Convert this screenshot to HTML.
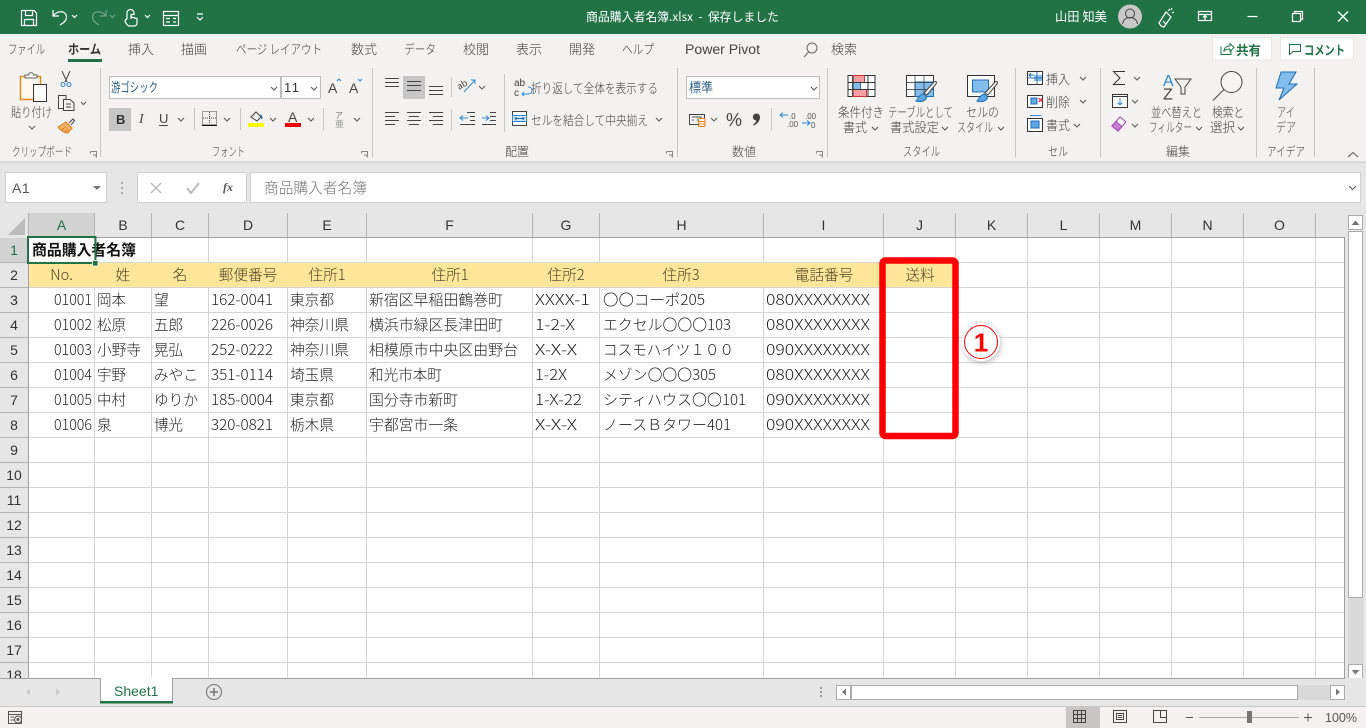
<!DOCTYPE html>
<html lang="ja"><head><meta charset="utf-8"><title>商品購入者名簿.xlsx</title>
<style>
html,body{margin:0;padding:0;width:1366px;height:728px;overflow:hidden;background:#e6e6e6}
svg{display:block;position:absolute;left:0;top:0}
text{font-family:"Liberation Sans","Noto Sans CJK JP",sans-serif}
.j{font-family:"Noto Sans CJK JP","Liberation Sans",sans-serif}
.r{font-size:13px;fill:#444;font-family:"Noto Sans CJK JP","Liberation Sans",sans-serif;font-weight:300}
.t{font-size:13px;fill:#444;font-family:"Noto Sans CJK JP","Liberation Sans",sans-serif;font-weight:300}
.c{font-size:14.67px;fill:#222;font-family:"Noto Sans CJK JP","Liberation Sans",sans-serif;font-weight:300}
.h{font-size:14.67px;fill:#4a4028;text-anchor:middle;font-family:"Noto Sans CJK JP","Liberation Sans",sans-serif;font-weight:300}
.ch{font-size:14px;fill:#333;text-anchor:middle}
.rh{font-size:14px;fill:#333;text-anchor:middle}
.ln{stroke:#444;fill:none;stroke-width:1}
.chev{stroke:#555;fill:none;stroke-width:1}
</style></head><body>
<svg width="1366" height="728" viewBox="0 0 1366 728" xmlns="http://www.w3.org/2000/svg">
<!-- backgrounds -->
<rect width="1366" height="728" fill="#e6e6e6"/>
<rect width="1366" height="34" fill="#217346"/>
<rect y="34" width="1366" height="127" fill="#f3f2f1"/>
<rect y="161" width="1366" height="2" fill="#d8d8d8"/>

<!-- title bar icons -->
<g stroke="#fff" fill="none" stroke-width="1.2">
<path d="M21.5 10.5H34L36.5 13V25.5H21.5Z"/><path d="M25.5 10.5V15.5H32.5V10.5"/><path d="M24.5 25.5V19.5H33.5V25.5"/>
<path d="M53 10V16H59"/><path d="M53.5 15.5C57 10.5 66 10 66.5 17C66.8 20 63.5 23 60 25"/>
<path d="M72 15l2.500 2.500 2.500-2.500"/>
<g opacity=".35"><path d="M106 10V16H100"/><path d="M105.500 15.500C102 10.500 93 10 92.500 17C92.200 20 95.500 23 99 25"/><path d="M110 15l2.500 2.500 2.500-2.500"/></g>
<path d="M127 19V13a3.500 3.500 0 0 1 7 0V14.500h-3V19M127 19a3 3 0 0 0-2 2.500c1 2 2 4 4 4.500h5c2 0 3-1.500 3-3v-4.500l-6-1.500"/>
<path d="M145 15l2.500 2.500 2.500-2.500"/>
<rect x="163.500" y="11.500" width="15" height="14"/><path d="M164 15.500H178M166 18.500H170M173 18.500H176M166 22H170M173 22H176"/>
<path d="M197 14H203M197 17l3 3 3-3"/>
<rect x="1198.500" y="11.500" width="13" height="9"/><path d="M1198.500 14.500h13M1205 20v-4M1203 17.500l2-2 2 2"/>
<path d="M1247.500 16.500H1257.500"/>
<rect x="1292.500" y="13.500" width="8" height="8"/><path d="M1294.500 13V11.500H1302.500V19.500H1301"/>
<path d="M1338 11.500L1348 21.500M1348 11.500L1338 21.500" stroke-width="1.300"/>
<path d="M1161 26l-2-3 7-11 5 5-7 10zM1168 11l2-2M1172 13l2-1M1171 10l1-2M1163 21l3 3"/>
</g>
<text x="586" y="21" class="j" style="font-size:12px;fill:#fff" textLength="193" lengthAdjust="spacingAndGlyphs">商品購入者名簿.xlsx&#160;&#160;-&#160;&#160;保存しました</text>
<text x="1055" y="21" class="j" style="font-size:12.500px;fill:#fff" textLength="52" lengthAdjust="spacingAndGlyphs">山田&#160;知美</text>
<circle cx="1130" cy="16.500" r="12" fill="#c8c8c8"/>
<circle cx="1130" cy="13.500" r="4.500" fill="none" stroke="#444"/><path d="M1122.500 24c1-5 4-6.500 7.500-6.500s6.500 1.500 7.500 6.500" fill="none" stroke="#444"/>

<!-- tabs -->
<text x="8" y="54" class="t" textLength="37" lengthAdjust="spacingAndGlyphs">ファイル</text>
<text x="68" y="54" class="t" textLength="33" lengthAdjust="spacingAndGlyphs" style="font-weight:700;fill:#333">ホーム</text>
<rect x="68" y="59" width="34" height="3" fill="#217346"/>
<text x="128" y="54" class="t" textLength="26" lengthAdjust="spacingAndGlyphs">挿入</text>
<text x="181" y="54" class="t" textLength="26" lengthAdjust="spacingAndGlyphs">描画</text>
<text x="236" y="54" class="t" textLength="86" lengthAdjust="spacingAndGlyphs">ページ&#160;レイアウト</text>
<text x="351" y="54" class="t" textLength="26" lengthAdjust="spacingAndGlyphs">数式</text>
<text x="404" y="54" class="t" textLength="32" lengthAdjust="spacingAndGlyphs">データ</text>
<text x="463" y="54" class="t" textLength="26" lengthAdjust="spacingAndGlyphs">校閲</text>
<text x="516" y="54" class="t" textLength="26" lengthAdjust="spacingAndGlyphs">表示</text>
<text x="569" y="54" class="t" textLength="26" lengthAdjust="spacingAndGlyphs">開発</text>
<text x="622" y="54" class="t" textLength="32" lengthAdjust="spacingAndGlyphs">ヘルプ</text>
<text x="685" y="54" textLength="75" lengthAdjust="spacingAndGlyphs" style="font-family:'Liberation Sans';font-size:13.500px;fill:#444">Power Pivot</text>
<g fill="none" stroke="#666"><circle cx="812" cy="48" r="5"/><path d="M808.500 52L804 57"/></g>
<text x="831" y="54" class="t" textLength="26" lengthAdjust="spacingAndGlyphs">検索</text>

<rect x="1212.500" y="38" width="59" height="22" fill="#fff" stroke="#e6e6e6"/>
<rect x="1280.500" y="38" width="73" height="22" fill="#fff" stroke="#e6e6e6"/>
<g fill="none" stroke="#217346"><path d="M1221 46.500V54.500H1231V50M1224 50c1-3 3-4 6-4V43.500l4 4-4 4V49c-2 0-4 0-6 2z"/><path d="M1289.500 44.500H1300.500V51.500H1293L1289.500 54.500Z"/></g>
<text x="1236" y="55" class="j" style="font-size:13px;font-weight:700;fill:#217346" textLength="25" lengthAdjust="spacingAndGlyphs">共有</text>
<text x="1304" y="55" class="j" style="font-size:13px;font-weight:700;fill:#217346" textLength="41" lengthAdjust="spacingAndGlyphs">コメント</text>

<!-- group separators -->
<g stroke="#c8c6c4"><path d="M100.500 68V157M372.500 68V157M677.500 68V157M827.500 68V157M1015.500 68V157M1100.500 68V157M1256.500 68V157M1314.500 68V157"/>
<path d="M451.500 77V97M451.500 109V130M504.500 74V132M194.500 108V130M240.500 108V130M323.500 108V130M771.500 108V130"/></g>

<!-- clipboard -->
<rect x="20.500" y="76.500" width="20" height="23" fill="#fff8ee" stroke="#e38a1c" stroke-width="1.500"/>
<path d="M25 78V75h3.500c0-3 5-3 5 0H37V78Z" fill="#f3f2f1" stroke="#666"/>
<rect x="33.500" y="84.500" width="13" height="17" fill="#fff" stroke="#333"/>
<text x="11" y="117" class="r" textLength="41" lengthAdjust="spacingAndGlyphs">貼り付け</text>
<path d="M29 126l3 3 3-3" class="chev"/>
<g fill="none" stroke="#444"><path d="M62 71l5 11M70 71l-5 11"/><g stroke="#2b88d8"><circle cx="63" cy="84.500" r="2"/><circle cx="69" cy="84.500" r="2"/></g>
<path d="M63 108.500H58.500V95.500H66V99M63.500 99.500H70L74 103V110.500H63.500ZM66 104H71M66 107H71"/></g>
<path d="M81 102l2.500 2.500 2.500-2.500" class="chev"/>
<path d="M58 127l8-5 6 6-4 5c-4 0-8-3-10-6z" fill="#f6b26b" stroke="#d97a0e"/><path d="M62 130l3-3M65 132l3-3" stroke="#d97a0e" fill="none"/><path d="M69 123l4-4 1.500 1.500-3.500 4.500" fill="#f3f2f1" stroke="#444"/>
<text x="12" y="156" class="r" style="font-size:12.500px" textLength="60" lengthAdjust="spacingAndGlyphs">クリップボード</text>
<path d="M90.500 151.500h6v6M90.500 151.500v2M93 155h3v2" stroke="#888" fill="none"/>

<!-- font -->
<rect x="109.500" y="76.500" width="171" height="22" fill="#fff" stroke="#bdbdbd"/>
<rect x="281.500" y="76.500" width="39" height="22" fill="#fff" stroke="#bdbdbd"/>
<text x="111" y="92" class="r" textLength="47" lengthAdjust="spacingAndGlyphs" style="fill:#2d5f8a;font-weight:400">游ゴシック</text>
<text x="284" y="92" style="font-size:13px;fill:#333" textLength="15">11</text>
<path d="M271 87l3 3 3-3M311 87l3 3 3-3" class="chev"/>
<text x="328" y="93" style="font-size:14px;fill:#444">A</text><path d="M337 81l2-2 2 2" stroke="#2b88d8" fill="none"/>
<text x="349" y="93" style="font-size:14px;fill:#444">A</text><path d="M358 79l2 2 2-2" stroke="#2b88d8" fill="none"/>
<rect x="109" y="108" width="22" height="23" fill="#c6c6c6"/>
<text x="116" y="124" style="font-size:13px;font-weight:700;fill:#333">B</text>
<text x="139" y="123" style="font-size:14px;font-style:italic;font-family:'Liberation Serif';fill:#444">I</text>
<text x="159" y="123" style="font-size:13px;fill:#444">U</text><path d="M159 125.500H168" stroke="#444"/>
<path d="M178 118l3 3 3-3M224 118l3 3 3-3M270 118l3 3 3-3M308 118l3 3 3-3M354 118l3 3 3-3" class="chev"/>
<rect x="202.500" y="111.500" width="14" height="13" fill="none" stroke="#444" stroke-dasharray="1 1"/><path d="M209.500 112V124M203 118H216" stroke="#444" stroke-dasharray="1 1"/><path d="M202 125.500H217" stroke="#111"/>
<path d="M251 117l5-5 5 5-4 4z" fill="none" stroke="#444"/><path d="M260 115c2 1 2 3 1.500 4" stroke="#2b6fb3" fill="none" stroke-width="1.500"/>
<rect x="248" y="123" width="16" height="4" fill="#ff0"/>
<text x="288" y="122" style="font-size:14px;fill:#444">A</text><rect x="285" y="123" width="16" height="4" fill="#e00"/>
<text x="335" y="118" class="j" style="font-size:8px;fill:#777">ア</text><text x="335" y="127" class="j" style="font-size:9px;fill:#999">亜</text>
<text x="212" y="156" class="r" style="font-size:12.500px" textLength="33" lengthAdjust="spacingAndGlyphs">フォント</text>
<path d="M361.500 151.500h6v6M361.500 151.500v2M364 155h3v2" stroke="#888" fill="none"/>

<!-- alignment -->
<rect x="403" y="76" width="22" height="23" fill="#c6c6c6"/>
<g stroke="#444"><path d="M385 78.500H399M385 82.500H399M385 86.500H399M407 81.500H421M407 85.500H421M407 90.500H421M429 86.500H443M429 90.500H443M429 94.500H443"/>
<path d="M385 112.500H399M385 116.500H395M385 120.500H399M385 124.500H395M407 112.500H421M409 116.500H419M407 120.500H421M409 124.500H419M429 112.500H443M433 116.500H443M429 120.500H443M433 124.500H443"/>
<path d="M467 112.500H475M470 116.500H475M470 120.500H475M460 124.500H475M490 112.500H496M490 116.500H496M490 120.500H496M482 124.500H496"/></g>
<path d="M468 118H460M463 115.500L460 118L463 120.500M482 118H489M486 115.500L489 118L486 120.500" stroke="#2b88d8" fill="none"/>
<text x="459" y="90" class="j" style="font-size:9px;fill:#444" transform="rotate(-30 459 90)">ab</text><path d="M464 92L475 80M471 80h4v4" stroke="#2b88d8" fill="none"/>
<path d="M479 86l3 3 3-3M656 118l3 3 3-3" class="chev"/>
<text x="514" y="86" style="font-size:10px;fill:#444">ab</text><text x="514" y="96" style="font-size:10px;fill:#444">c</text><path d="M528 87c3 0 4 1 4 3.500s-2 3.500-4 3.500h-6M524 92l-2 2 2 2" stroke="#2b88d8" fill="none"/>
<text x="531" y="93" class="r" textLength="127" lengthAdjust="spacingAndGlyphs">折り返して全体を表示する</text>
<rect x="512.500" y="111.500" width="14" height="14" fill="#fff" stroke="#444"/><rect x="512.500" y="115.500" width="14" height="6" fill="#cfe6f8" stroke="#2b88d8"/><path d="M515 118.500H524M516.500 117l-1.500 1.500 1.500 1.500M522.500 117l1.500 1.500-1.500 1.500" stroke="#2b6fb3" fill="none"/>
<text x="531" y="125" class="r" textLength="117" lengthAdjust="spacingAndGlyphs">セルを結合して中央揃え</text>
<text x="505" y="156" class="r" style="font-size:12.500px" textLength="24" lengthAdjust="spacingAndGlyphs">配置</text>
<path d="M666.500 151.500h6v6M666.500 151.500v2M669 155h3v2" stroke="#888" fill="none"/>

<!-- number -->
<rect x="686.500" y="76.500" width="133" height="22" fill="#fff" stroke="#bdbdbd"/>
<text x="689" y="92" class="r" textLength="24" lengthAdjust="spacingAndGlyphs" style="fill:#2d5f8a;font-weight:400">標準</text>
<path d="M811 87l3 3 3-3M711 118l3 3 3-3" class="chev"/>
<rect x="689.500" y="114.500" width="15" height="10" fill="none" stroke="#444"/><path d="M692 117h10M692 120h2M697 120h5" stroke="#555"/>
<rect x="698.500" y="118.500" width="6.500" height="8" rx="1" fill="#fff" stroke="#e07a10"/><path d="M699 121.500h6M699 124h6" stroke="#e07a10"/>
<text x="726" y="126" style="font-size:18px;fill:#444">%</text>
<path d="M756.500 113.500a3.500 3.500 0 0 1 3.500 3.500c0 4-2.500 7-6.500 8.500l-.5-1c2-1 3-2.500 3.200-4a3.500 3.500 0 0 1 .3-7z" fill="#444"/>
<text x="789" y="119" style="font-size:8px;fill:#555">.0</text><text x="787" y="127" style="font-size:8px;fill:#555">.00</text>
<path d="M780 115H788M783 112.500L780 115L783 117.500" stroke="#2b88d8" fill="none"/>
<text x="805" y="119" style="font-size:8px;fill:#555">.00</text><text x="811" y="128" style="font-size:8px;fill:#555">0</text>
<path d="M802 123H810M807 120.500L810 123L807 125.500" stroke="#2b88d8" fill="none"/>
<text x="732" y="156" class="r" style="font-size:12.500px" textLength="24" lengthAdjust="spacingAndGlyphs">数値</text>
<path d="M816.500 151.500h6v6M816.500 151.500v2M819 155h3v2" stroke="#888" fill="none"/>

<!-- styles -->
<g>
<rect x="848" y="75.500" width="27" height="21" fill="#fff" stroke="#333"/>
<rect x="852.500" y="75.500" width="12" height="7" fill="#fa9ea4" stroke="#d13438"/>
<rect x="852.500" y="89.500" width="14" height="7" fill="#fa9ea4" stroke="#d13438"/>
<rect x="852.500" y="82.500" width="8" height="7" fill="#83bdec" stroke="#2b6fb3"/>
<path d="M868 76V96M848 82.500H875M848 89.500H875M853 76V96" stroke="#333" fill="none"/>

<rect x="906.500" y="75.500" width="27" height="21" fill="#fff" stroke="#333"/>
<rect x="915" y="82" width="18.500" height="14.500" fill="#83bdec" stroke="#1f6fb5"/>
<path d="M906 82.500H934M906 89.500H934M915 76V96M924 76V96" stroke="#333" fill="none" stroke-width=".7"/>
<path d="M924 93l10-11c2-1.500 3 0 2 2l-9 11z" fill="#f3f2f1" stroke="#444"/><path d="M916 101c2-1 2-6 7-7 3 1 4 3 3 5-3 3-7 3-10 2z" fill="#5ea7e5" stroke="#1f6fb5"/>

<rect x="967.500" y="75.500" width="27" height="21" fill="#fff" stroke="#333"/>
<rect x="972.500" y="80" width="16" height="12" fill="#83bdec" stroke="#1f6fb5"/>
<path d="M985 93l10-11c2-1.500 3 0 2 2l-9 11z" fill="#f3f2f1" stroke="#444"/><path d="M977 101c2-1 2-6 7-7 3 1 4 3 3 5-3 3-7 3-10 2z" fill="#5ea7e5" stroke="#1f6fb5"/>
</g>
<text x="838" y="117" class="r" textLength="46" lengthAdjust="spacingAndGlyphs">条件付き</text>
<text x="843" y="132" class="r" textLength="24" lengthAdjust="spacingAndGlyphs">書式</text><path d="M872 127l3 3 3-3" class="chev"/>
<text x="888" y="117" class="r" textLength="65" lengthAdjust="spacingAndGlyphs">テーブルとして</text>
<text x="890" y="132" class="r" textLength="49" lengthAdjust="spacingAndGlyphs">書式設定</text><path d="M942 127l3 3 3-3" class="chev"/>
<text x="966" y="117" class="r" textLength="33" lengthAdjust="spacingAndGlyphs">セルの</text>
<text x="957" y="132" class="r" textLength="36" lengthAdjust="spacingAndGlyphs">スタイル</text><path d="M998 127l3 3 3-3" class="chev"/>
<text x="903" y="156" class="r" style="font-size:12.500px" textLength="37" lengthAdjust="spacingAndGlyphs">スタイル</text>

<!-- cells -->
<g>
<rect x="1027.500" y="71.500" width="15" height="13" fill="#fff" stroke="#333"/><rect x="1034" y="75" width="8" height="6" fill="#83bdec"/><path d="M1037 72V84M1028 78H1042M1034 75H1029M1031 73l-2 2 2 2" stroke="#2b6fb3" fill="none"/>
<rect x="1027.500" y="95.500" width="15" height="12" fill="#fff" stroke="#333"/><rect x="1031" y="98" width="6" height="6" fill="#5ea7e5" stroke="#1f6fb5"/><path d="M1038.500 98l4 4m0-4l-4 4" stroke="#e81123" fill="none"/>
<rect x="1027.500" y="118.500" width="15" height="13" fill="#fff" stroke="#333"/><rect x="1031" y="121" width="8" height="7" fill="#5ea7e5" stroke="#1f6fb5"/><path d="M1030 115.500H1041" stroke="#2b88d8"/>
</g>
<text x="1046" y="84" class="r" textLength="24" lengthAdjust="spacingAndGlyphs">挿入</text>
<text x="1046" y="107" class="r" textLength="24" lengthAdjust="spacingAndGlyphs">削除</text>
<text x="1046" y="130" class="r" textLength="24" lengthAdjust="spacingAndGlyphs">書式</text>
<path d="M1080 77l3 3 3-3M1080 100l3 3 3-3M1074 124l3 3 3-3" class="chev"/>
<text x="1048" y="156" class="r" style="font-size:12.500px" textLength="20" lengthAdjust="spacingAndGlyphs">セル</text>

<!-- editing -->
<path d="M1125 71.500H1113.500L1120 78L1113.500 84.500H1125" fill="none" stroke="#333"/>
<path d="M1134 77l3 3 3-3M1132 100l3 3 3-3M1132 124l3 3 3-3M1196 127l3 3 3-3M1238 127l3 3 3-3" class="chev"/>
<rect x="1112.500" y="94.500" width="15" height="13" fill="#fff" stroke="#333"/><path d="M1112.500 96.500H1127.500" stroke="#333"/><path d="M1120 98V105M1117.500 102.500L1120 105L1122.500 102.500" stroke="#2b88d8" fill="none"/>
<path d="M1112 126l8-9 6 5-8 9z" fill="#fff" stroke="#a146b0"/><path d="M1112 126l4-4.500 6 5-4 4.500z" fill="#c77fd2" stroke="#a146b0"/>
<text x="1163" y="86" style="font-size:16px;fill:#2b88d8">A</text><text x="1163" y="99.500" style="font-size:16px;fill:#444">Z</text>
<path d="M1175 79H1191L1185 87V94L1181 94V87Z" fill="#f3f2f1" stroke="#444"/>
<circle cx="1231.500" cy="82" r="10.500" fill="#f6f5f4" stroke="#444"/><path d="M1224 89.500L1213 100.500" stroke="#444"/>
<text x="1151" y="117" class="r" textLength="51" lengthAdjust="spacingAndGlyphs">並べ替えと</text>
<text x="1149" y="132" class="r" textLength="43" lengthAdjust="spacingAndGlyphs">フィルター</text>
<text x="1212" y="117" class="r" textLength="32" lengthAdjust="spacingAndGlyphs">検索と</text>
<text x="1210" y="132" class="r" textLength="25" lengthAdjust="spacingAndGlyphs">選択</text>
<text x="1166" y="156" class="r" style="font-size:12.500px" textLength="24" lengthAdjust="spacingAndGlyphs">編集</text>

<!-- ideas -->
<path d="M1281 72H1296L1289 84H1297L1279 100L1284 88H1276Z" fill="#83bdec" stroke="#1f6fb5"/>
<text x="1277" y="117" class="r" textLength="18" lengthAdjust="spacingAndGlyphs">アイ</text>
<text x="1276" y="132" class="r" textLength="20" lengthAdjust="spacingAndGlyphs">デア</text>
<text x="1267" y="156" class="r" style="font-size:12.500px" textLength="38" lengthAdjust="spacingAndGlyphs">アイデア</text>
<path d="M1348 157l5-4.500 5 4.500" fill="none" stroke="#555"/>

<!-- formula bar -->
<rect x="5.500" y="172.500" width="101" height="30" fill="#fff" stroke="#d0d0d0"/>
<text x="12" y="193" style="font-size:14px;fill:#555;letter-spacing:.5px">A1</text>
<path d="M93 186H101L97 190Z" fill="#777"/>
<g fill="#aaa"><rect x="121" y="182" width="2" height="2"/><rect x="121" y="187" width="2" height="2"/><rect x="121" y="192" width="2" height="2"/></g>
<rect x="137.500" y="172.500" width="109" height="30" fill="#fff" stroke="#d0d0d0"/>
<path d="M151 183L161 193M161 183L151 193" stroke="#bbb" stroke-width="1.500"/>
<path d="M187 188L191 193L199 183" stroke="#bbb" stroke-width="2" fill="none"/>
<text x="223" y="191" style="font-size:12px;font-style:italic;font-weight:700;fill:#555;font-family:'Liberation Serif'">fx</text>
<rect x="250.500" y="172.500" width="1110" height="30" fill="#fff" stroke="#d0d0d0"/>
<text x="264" y="193" class="c" style="fill:#777" textLength="103" lengthAdjust="spacingAndGlyphs">商品購入者名簿</text>
<path d="M1349 186l3.500 3.500 3.500-3.500" class="chev"/>

<!-- headers -->
<rect x="0" y="213" width="1345" height="25" fill="#e6e6e6"/>
<rect x="0" y="238" width="28" height="440" fill="#e6e6e6"/>
<rect x="29" y="213" width="66" height="24" fill="#d2d2d2"/>
<rect x="0" y="238" width="28" height="25" fill="#d2d2d2"/>
<path d="M25 218V235H8Z" fill="#bcbcbc"/>
<g stroke="#b4b4b4"><path d="M28.500 213V237M94.500 213V237M151.500 213V237M208.500 213V237M287.500 213V237M366.500 213V237M532.500 213V237M599.500 213V237M763.500 213V237M883.500 213V237M955.500 213V237M1027.500 213V237M1099.500 213V237M1171.500 213V237M1243.500 213V237M1315.500 213V237"/>
<path d="M0 262.500H28M0 287.500H28M0 312.500H28M0 337.500H28M0 362.500H28M0 387.500H28M0 412.500H28M0 437.500H28M0 462.500H28M0 487.500H28M0 512.500H28M0 537.500H28M0 562.500H28M0 587.500H28M0 612.500H28M0 637.500H28M0 662.500H28"/></g>
<g class="ch">
<text x="61.500" y="230" class="ch" style="fill:#1f6f4a">A</text><text x="123" y="230" class="ch">B</text><text x="180" y="230" class="ch">C</text><text x="248" y="230" class="ch">D</text><text x="327" y="230" class="ch">E</text><text x="449.500" y="230" class="ch">F</text><text x="566" y="230" class="ch">G</text><text x="681.500" y="230" class="ch">H</text><text x="823.500" y="230" class="ch">I</text><text x="919.500" y="230" class="ch">J</text><text x="991.500" y="230" class="ch">K</text><text x="1063.500" y="230" class="ch">L</text><text x="1135.500" y="230" class="ch">M</text><text x="1207.500" y="230" class="ch">N</text><text x="1279.500" y="230" class="ch">O</text>
</g>
<text x="14" y="255" class="rh" style="fill:#1f6f4a">1</text><text x="14" y="280" class="rh">2</text><text x="14" y="305" class="rh">3</text><text x="14" y="330" class="rh">4</text><text x="14" y="355" class="rh">5</text><text x="14" y="380" class="rh">6</text><text x="14" y="405" class="rh">7</text><text x="14" y="430" class="rh">8</text><text x="14" y="455" class="rh">9</text><text x="14" y="480" class="rh">10</text><text x="14" y="505" class="rh">11</text><text x="14" y="530" class="rh">12</text><text x="14" y="555" class="rh">13</text><text x="14" y="580" class="rh">14</text><text x="14" y="605" class="rh">15</text><text x="14" y="630" class="rh">16</text><text x="14" y="655" class="rh">17</text><text x="14" y="680" class="rh">18</text>

<!-- grid -->
<rect x="29" y="238" width="1315" height="440" fill="#fff"/>
<rect x="29" y="263" width="926" height="25" fill="#ffe699"/>
<g stroke="#d4d4d4">
<path d="M29 287.500H1344M29 312.500H1344M29 337.500H1344M29 362.500H1344M29 387.500H1344M29 412.500H1344M29 437.500H1344M29 462.500H1344M29 487.500H1344M29 512.500H1344M29 537.500H1344M29 562.500H1344M29 587.500H1344M29 612.500H1344M29 637.500H1344M29 662.500H1344"/>
<path d="M29 262.500H1344"/>
<path d="M94.500 238V263M151.500 238V263M208.500 238V263M287.500 238V263M366.500 238V263M532.500 238V263M599.500 238V263M763.500 238V263M883.500 238V263M955.500 238V263"/>
<path d="M94.500 288V678M151.500 288V678M208.500 288V678M287.500 288V678M366.500 288V678M532.500 288V678M599.500 288V678M763.500 288V678M883.500 288V678M955.500 288V678M1027.500 238V678M1099.500 238V678M1171.500 238V678M1243.500 238V678M1315.500 238V678"/>
</g>
<path d="M28.500 238V678M28 237.500H1345M1344.500 237V678" stroke="#a0a0a0" fill="none"/>

<!-- cell text -->
<text x="32" y="255" class="c" style="font-weight:700;fill:#111" textLength="104" lengthAdjust="spacingAndGlyphs">商品購入者名簿</text>
<text x="61.500" y="280" class="h">No.</text><text x="123" y="280" class="h">姓</text><text x="180" y="280" class="h">名</text><text x="248" y="280" class="h">郵便番号</text><text x="327" y="280" class="h">住所1</text><text x="450" y="280" class="h">住所1</text><text x="566" y="280" class="h">住所2</text><text x="681" y="280" class="h">住所3</text><text x="824" y="280" class="h">電話番号</text><text x="920" y="280" class="h">送料</text>

<text x="54" y="305" class="c" textLength="38" lengthAdjust="spacingAndGlyphs">01001</text><text x="97" y="305" class="c" textLength="29" lengthAdjust="spacingAndGlyphs">岡本</text><text x="154" y="305" class="c">望</text><text x="211" y="305" class="c" textLength="62" lengthAdjust="spacingAndGlyphs">162-0041</text><text x="290" y="305" class="c" textLength="44" lengthAdjust="spacingAndGlyphs">東京都</text><text x="369" y="305" class="c" textLength="134" lengthAdjust="spacingAndGlyphs">新宿区早稲田鶴巻町</text><text x="535" y="305" class="c" textLength="55" lengthAdjust="spacingAndGlyphs">XXXX-1</text><text x="603" y="305" class="c" textLength="102" lengthAdjust="spacingAndGlyphs">〇〇コーポ205</text><text x="766" y="305" class="c" textLength="104" lengthAdjust="spacingAndGlyphs">080XXXXXXXX</text>
<text x="54" y="330" class="c" textLength="38" lengthAdjust="spacingAndGlyphs">01002</text><text x="97" y="330" class="c" textLength="29" lengthAdjust="spacingAndGlyphs">松原</text><text x="154" y="330" class="c" textLength="29" lengthAdjust="spacingAndGlyphs">五郎</text><text x="211" y="330" class="c" textLength="62" lengthAdjust="spacingAndGlyphs">226-0026</text><text x="290" y="330" class="c" textLength="59" lengthAdjust="spacingAndGlyphs">神奈川県</text><text x="369" y="330" class="c" textLength="134" lengthAdjust="spacingAndGlyphs">横浜市緑区長津田町</text><text x="535" y="330" class="c" textLength="40" lengthAdjust="spacingAndGlyphs">1-2-X</text><text x="603" y="330" class="c" textLength="128" lengthAdjust="spacingAndGlyphs">エクセル〇〇〇103</text><text x="766" y="330" class="c" textLength="104" lengthAdjust="spacingAndGlyphs">080XXXXXXXX</text>
<text x="54" y="355" class="c" textLength="38" lengthAdjust="spacingAndGlyphs">01003</text><text x="97" y="355" class="c" textLength="44" lengthAdjust="spacingAndGlyphs">小野寺</text><text x="154" y="355" class="c" textLength="29" lengthAdjust="spacingAndGlyphs">晃弘</text><text x="211" y="355" class="c" textLength="62" lengthAdjust="spacingAndGlyphs">252-0222</text><text x="290" y="355" class="c" textLength="59" lengthAdjust="spacingAndGlyphs">神奈川県</text><text x="369" y="355" class="c" textLength="149" lengthAdjust="spacingAndGlyphs">相模原市中央区由野台</text><text x="535" y="355" class="c" textLength="42" lengthAdjust="spacingAndGlyphs">X-X-X</text><text x="603" y="355" class="c" textLength="131" lengthAdjust="spacingAndGlyphs">コスモハイツ１００</text><text x="766" y="355" class="c" textLength="104" lengthAdjust="spacingAndGlyphs">090XXXXXXXX</text>
<text x="54" y="380" class="c" textLength="38" lengthAdjust="spacingAndGlyphs">01004</text><text x="97" y="380" class="c" textLength="29" lengthAdjust="spacingAndGlyphs">宇野</text><text x="154" y="380" class="c" textLength="44" lengthAdjust="spacingAndGlyphs">みやこ</text><text x="211" y="380" class="c" textLength="62" lengthAdjust="spacingAndGlyphs">351-0114</text><text x="290" y="380" class="c" textLength="44" lengthAdjust="spacingAndGlyphs">埼玉県</text><text x="369" y="380" class="c" textLength="73" lengthAdjust="spacingAndGlyphs">和光市本町</text><text x="535" y="380" class="c" textLength="32" lengthAdjust="spacingAndGlyphs">1-2X</text><text x="603" y="380" class="c" textLength="113" lengthAdjust="spacingAndGlyphs">メゾン〇〇〇305</text><text x="766" y="380" class="c" textLength="104" lengthAdjust="spacingAndGlyphs">080XXXXXXXX</text>
<text x="54" y="405" class="c" textLength="38" lengthAdjust="spacingAndGlyphs">01005</text><text x="97" y="405" class="c" textLength="29" lengthAdjust="spacingAndGlyphs">中村</text><text x="154" y="405" class="c" textLength="44" lengthAdjust="spacingAndGlyphs">ゆりか</text><text x="211" y="405" class="c" textLength="62" lengthAdjust="spacingAndGlyphs">185-0004</text><text x="290" y="405" class="c" textLength="44" lengthAdjust="spacingAndGlyphs">東京都</text><text x="369" y="405" class="c" textLength="89" lengthAdjust="spacingAndGlyphs">国分寺市新町</text><text x="535" y="405" class="c" textLength="47" lengthAdjust="spacingAndGlyphs">1-X-22</text><text x="603" y="405" class="c" textLength="143" lengthAdjust="spacingAndGlyphs">シティハウス〇〇101</text><text x="766" y="405" class="c" textLength="104" lengthAdjust="spacingAndGlyphs">090XXXXXXXX</text>
<text x="54" y="430" class="c" textLength="38" lengthAdjust="spacingAndGlyphs">01006</text><text x="97" y="430" class="c">泉</text><text x="154" y="430" class="c" textLength="29" lengthAdjust="spacingAndGlyphs">博光</text><text x="211" y="430" class="c" textLength="62" lengthAdjust="spacingAndGlyphs">320-0821</text><text x="290" y="430" class="c" textLength="44" lengthAdjust="spacingAndGlyphs">栃木県</text><text x="369" y="430" class="c" textLength="89" lengthAdjust="spacingAndGlyphs">宇都宮市一条</text><text x="535" y="430" class="c" textLength="42" lengthAdjust="spacingAndGlyphs">X-X-X</text><text x="603" y="430" class="c" textLength="128" lengthAdjust="spacingAndGlyphs">ノースＢタワー401</text><text x="766" y="430" class="c" textLength="104" lengthAdjust="spacingAndGlyphs">090XXXXXXXX</text>

<!-- selection -->
<rect x="28" y="237" width="67.500" height="26" fill="none" stroke="#217346" stroke-width="2"/>
<rect x="92.500" y="260.500" width="5.500" height="5.500" fill="#217346" stroke="#fff" stroke-width=".8"/>

<!-- annotation -->
<rect x="882.500" y="260.500" width="73" height="175.500" rx="3" fill="none" stroke="#f00" stroke-width="6.500"/>
<defs><filter id="s" x="-40%" y="-40%" width="180%" height="180%"><feDropShadow dx="1" dy="2" stdDeviation="3" flood-color="#000" flood-opacity=".25"/></filter></defs>
<circle cx="981" cy="342" r="19" fill="#fff" filter="url(#s)"/>
<circle cx="981" cy="342" r="16.500" fill="#fff" stroke="#f00" stroke-width="1"/>
<text x="981" y="351.500" style="font-size:26px;font-weight:700;fill:#f00;text-anchor:middle">1</text>

<!-- vertical scrollbar -->
<rect x="1348" y="231" width="15" height="433" fill="#d9d9d9"/>
<rect x="1348.500" y="215.500" width="14" height="14" fill="#fff" stroke="#ababab"/>
<path d="M1351.500 225H1359.500L1355.500 220.500Z" fill="#777"/>
<rect x="1348.500" y="231.500" width="14" height="366" fill="#fff" stroke="#ababab"/>
<rect x="1348.500" y="664.500" width="14" height="14" fill="#fff" stroke="#ababab"/>
<path d="M1351.500 670H1359.500L1355.500 674.500Z" fill="#777"/>

<!-- tab strip -->
<rect x="0" y="678" width="1366" height="28" fill="#e6e6e6"/>
<rect x="0" y="678" width="1345" height="1" fill="#a0a0a0"/>
<path d="M26 692l4-3.500v7zM60 692l-4-3.500v7z" fill="#c8c8c8"/>
<rect x="100" y="678" width="73" height="25" fill="#fff"/>
<path d="M100.500 678V703M172.500 678V703" stroke="#a0a0a0"/>
<rect x="100" y="701" width="73" height="2.500" fill="#217346"/>
<text x="114" y="696" style="font-size:14px;fill:#217346">Sheet1</text>
<circle cx="214" cy="692" r="7.500" fill="none" stroke="#888" stroke-width="1.300"/><path d="M210 692H218M214 688V696" stroke="#777" stroke-width="1.500"/>
<g fill="#999"><rect x="820" y="687" width="2" height="2"/><rect x="820" y="691" width="2" height="2"/><rect x="820" y="695" width="2" height="2"/></g>
<rect x="836.500" y="685.500" width="14" height="14" fill="#fff" stroke="#ababab"/><path d="M846 688.500v7l-4-3.500z" fill="#777"/>
<rect x="851" y="685" width="479" height="15" fill="#d9d9d9"/>
<rect x="851.500" y="685.500" width="446" height="14" fill="#fff" stroke="#ababab"/>
<rect x="1330.500" y="685.500" width="14" height="14" fill="#fff" stroke="#ababab"/><path d="M1336 688.500v7l4-3.500z" fill="#777"/>

<!-- status bar -->
<rect x="0" y="706" width="1366" height="22" fill="#f3f2f1"/>
<rect x="0" y="706" width="1366" height="1" fill="#c8c8c8"/>
<g fill="none" stroke="#555"><rect x="8.500" y="711.500" width="13" height="12"/><path d="M9 714.500H21M10.500 717H14M10.500 720H14"/><circle cx="18" cy="719.500" r="3.500" fill="#f3f2f1"/></g><circle cx="18" cy="719.500" r="1.500" fill="#555"/>
<rect x="1066" y="707" width="34" height="21" fill="#c8c6c4"/>
<g fill="none" stroke="#444">
<rect x="1073.500" y="710.500" width="12" height="12"/><path d="M1077.500 711V722M1081.500 711V722M1074 714.500H1085M1074 718.500H1085"/>
<rect x="1113.500" y="710.500" width="13" height="12"/><rect x="1116.500" y="713.500" width="7" height="6"/><path d="M1118 715.500H1122M1118 717.500H1122"/>
<path d="M1153.500 710.500H1166.500V722.500H1153.500ZM1160.500 711V717.500H1166"/>
</g>
<path d="M1186 717.500H1193" stroke="#555"/><path d="M1199 717.500H1299" stroke="#aaa"/>
<rect x="1247" y="711" width="5" height="12" fill="#777"/>
<path d="M1304 717.500H1312M1308 713.500V721.500" stroke="#555"/>
<text x="1325" y="722" style="font-size:12.500px;fill:#555" textLength="32" lengthAdjust="spacingAndGlyphs">100%</text>
</svg>
</body></html>
